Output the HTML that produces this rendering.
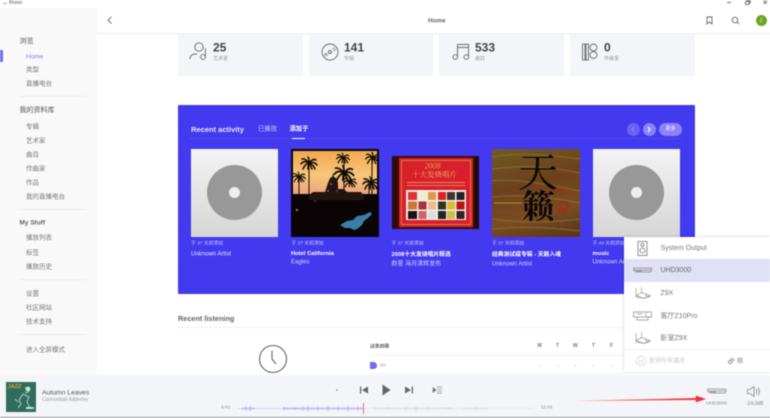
<!DOCTYPE html>
<html lang="zh"><head><meta charset="utf-8"><title>Roon</title>
<style>
html,body{margin:0;padding:0;background:#fff}
#r{position:relative;width:770px;height:418px;overflow:hidden;background:#fff;font-family:"Liberation Sans","Noto Sans CJK SC",sans-serif;color:#555;filter:blur(.4px)}
#r div,#r span.t{position:absolute}
.t{white-space:nowrap;line-height:1;transform:translateY(calc(-50% + .7px))}
.s{left:26px;font-size:6.5px;color:#777}
.h{left:19.5px;font-size:7px;color:#555}
.l{position:absolute;left:19px;width:68px;height:1px;background:#ececef}
.card{top:33.5px;height:42px;width:124.5px;background:#f4f5f9}
.n{font-size:12px;font-weight:bold;color:#444}
.lab{font-size:5px;color:#999}
.cap{font-size:4.8px;color:#c9c9ff}
.ti{font-size:5.8px;color:#fff;font-weight:bold}
.su{font-size:6px;color:#d4d4ff}
.pr{left:660.5px;font-size:7px;color:#777}
.cov{top:149px;width:87.5px;height:87.5px;background:linear-gradient(#f3f3f3,#d6d6d6);overflow:hidden}
.cov i{position:absolute;left:16.5px;top:16px;width:55px;height:55px;border-radius:50%;background:#989898}
.cov b{position:absolute;left:38px;top:37.5px;width:11.5px;height:11.5px;border-radius:50%;background:#eee}
svg{position:absolute;overflow:visible}
.d{font-size:5px;color:#777}
</style></head><body><div id="r">

<!-- title bar -->
<div style="left:3px;top:3px;width:4px;height:1px;background:#aaa"></div>
<span class="t" style="left:9px;top:2.500px;font-size:5.500px;color:#555">Roon</span>
<div style="left:727px;top:2px;width:4px;height:1px;background:#666"></div>
<svg style="left:745px;top:0" width="6" height="5" fill="none" stroke="#555" stroke-width=".8"><path d="M.5 1.5h3.5v3h-3.5zM2 1.5V.5h3.2v2.5H4"/></svg>
<svg style="left:763px;top:0" width="5" height="5" fill="none" stroke="#555" stroke-width=".8"><path d="M.5 .5l3.500 3.500M4 .5L.5 4"/></svg>

<!-- sidebar -->
<div style="left:0;top:8px;width:97px;height:367px;background:#f9f9fa"></div>
<div style="left:0;top:50px;width:2.5px;height:12px;background:#6f6cf5"></div>
<span class="t h" style="top:41px">浏览</span>
<span class="t s" style="top:56.5px;color:#8482f5">Home</span>
<span class="t s" style="top:70px">类型</span>
<span class="t s" style="top:84px">直播电台</span>
<div class="l" style="top:96px"></div>
<span class="t h" style="top:110px">我的资料库</span>
<span class="t s" style="top:126.5px">专辑</span>
<span class="t s" style="top:140.5px">艺术家</span>
<span class="t s" style="top:155px">曲目</span>
<span class="t s" style="top:169px">作曲家</span>
<span class="t s" style="top:183px">作品</span>
<span class="t s" style="top:197px">我的直播电台</span>
<div class="l" style="top:209px"></div>
<span class="t h" style="top:222.5px;font-size:6.5px;font-weight:bold;color:#666">My Stuff</span>
<span class="t s" style="top:238px">播放列表</span>
<span class="t s" style="top:252.5px">标签</span>
<span class="t s" style="top:266.5px">播放历史</span>
<div class="l" style="top:279px"></div>
<span class="t s" style="top:294px">设置</span>
<span class="t s" style="top:308px">社区网站</span>
<span class="t s" style="top:322px">技术支持</span>
<div class="l" style="top:334px"></div>
<span class="t s" style="top:349.5px">进入全屏模式</span>

<!-- header -->
<div style="left:97px;top:33px;width:673px;height:1px;background:#f0f0f3"></div>
<svg style="left:107px;top:16px" width="6" height="9" fill="none" stroke="#666" stroke-width=".9"><path d="M4.5 .8L1 4.200l3.500 3.500"/></svg>
<span class="t" style="left:428px;top:20.5px;font-size:6.300px;font-weight:bold;color:#666">Home</span>
<svg style="left:706px;top:16px" width="7" height="9" fill="none" stroke="#666" stroke-width=".9"><path d="M1 1h5v7L3.500 6 1 8z"/></svg>
<svg style="left:731px;top:16px" width="9" height="9" fill="none" stroke="#666" stroke-width=".9"><circle cx="4" cy="4" r="2.800"/><path d="M6 6l2 2"/></svg>
<div style="left:755.5px;top:15px;width:11px;height:11px;border-radius:50%;background:#6aa524"></div>
<span class="t" style="left:759.5px;top:20.500px;font-size:5px;color:#fff">J</span>

<!-- stat cards -->
<div class="card" style="left:178px"></div>
<div class="card" style="left:308.5px"></div>
<div class="card" style="left:439px"></div>
<div class="card" style="left:570px"></div>
<svg style="left:189px;top:42px" width="20" height="19" fill="none" stroke="#666" stroke-width=".9"><circle cx="10" cy="5" r="4.200"/><path d="M1 17c0-3 2-5 5-5h2"/><circle cx="14" cy="15" r="2.400"/><path d="M16.400 15V6"/></svg>
<svg style="left:321px;top:43px" width="18" height="18" fill="none" stroke="#666" stroke-width=".9"><circle cx="9" cy="9" r="8"/><circle cx="9" cy="9" r="1.500"/><path d="M3 12l3-2M4.500 13.500l2-2M11.500 6.500l2-2M13 8l2-2" stroke-width=".8"/></svg>
<svg style="left:452px;top:43px" width="18" height="17" fill="none" stroke="#666" stroke-width=".9"><path d="M5.500 14V1.500h11V14M5.500 4.500h11"/><circle cx="3.300" cy="14" r="2.300"/><circle cx="14.300" cy="14" r="2.300"/></svg>
<svg style="left:582px;top:43px" width="16" height="18" fill="none" stroke="#666" stroke-width=".9"><rect x=".5" y="1" width="2.500" height="16"/><rect x="4" y="1" width="2.500" height="16"/><circle cx="11.500" cy="4.500" r="3.500"/><circle cx="11.500" cy="12" r="3.500"/></svg>
<span class="t n" style="left:213px;top:46.500px">25</span><span class="t lab" style="left:213px;top:59px">艺术家</span>
<span class="t n" style="left:344px;top:46.500px">141</span><span class="t lab" style="left:344px;top:59px">专辑</span>
<span class="t n" style="left:475px;top:46.500px">533</span><span class="t lab" style="left:475px;top:59px">曲目</span>
<span class="t n" style="left:604px;top:46.500px">0</span><span class="t lab" style="left:604px;top:59px">作曲家</span>

<!-- blue panel -->
<div style="left:178px;top:105px;width:516.500px;height:189px;background:#4339ef;border-radius:1px"></div>
<span class="t" style="left:191px;top:128.500px;font-size:7.500px;font-weight:bold;color:#e6e6ff">Recent activity</span>
<span class="t" style="left:258px;top:128.500px;font-size:6.300px;color:#c9c9ff">已播放</span>
<span class="t" style="left:289.500px;top:128.500px;font-size:6.300px;font-weight:bold;color:#fff">添加于</span>
<div style="left:190px;top:138px;width:491px;height:1px;background:#5249f2"></div>
<div style="left:291.500px;top:137.500px;width:13px;height:1.200px;background:#fff"></div>
<div style="left:626.500px;top:123px;width:13px;height:13px;border-radius:50%;background:#6a62f4"></div>
<svg style="left:631px;top:126px" width="4" height="7" fill="none" stroke="#8f89f8" stroke-width="1"><path d="M3 1L1 3.500 3 6"/></svg>
<div style="left:642.500px;top:123px;width:13px;height:13px;border-radius:50%;background:#8a84f8"></div>
<svg style="left:647px;top:126px" width="4" height="7" fill="none" stroke="#fff" stroke-width="1.100"><path d="M1 1l2 2.500L1 6"/></svg>
<div style="left:659px;top:123px;width:22.500px;height:13px;border-radius:6.500px;background:#8a84f8"></div>
<span class="t" style="left:665.500px;top:129px;font-size:5px;color:#fff">更多</span>

<!-- covers -->
<div class="cov" style="left:190.500px"><i></i><b></b></div>

<div style="left:291px;top:149px;width:87.500px;height:87.500px;background:#05060c;overflow:hidden">
<svg width="88" height="88" viewBox="0 0 88 88">
<defs>
<linearGradient id="sky" x1="0" y1="0" x2="0" y2="1"><stop offset="0" stop-color="#f2a84e"/><stop offset=".55" stop-color="#f8c67c"/><stop offset="1" stop-color="#eaa27e"/></linearGradient>
<g id="palm" fill="none" stroke="#120c06" stroke-width="1.500" stroke-linecap="round"><path d="M0 0q-5-3-8 1M0 0q-4-5-7-4M0 0q0-5-1-6M0 0q4-5 7-3M0 0q5-2 8 2M0 0q-4 1-6 6M0 0q4 1 6 6M0 0q-1 3-1 6M0 0q2 3 3 6"/></g>
</defs>
<rect x="2" y="2" width="84" height="44" fill="url(#sky)"/>
<rect x="2" y="45" width="84" height="41" fill="#0a0504"/>
<path d="M8 46V28M18 46V14M53 46V8M81 46V8M78 46V34" stroke="#120c06" stroke-width="1" fill="none"/>
<use href="#palm" transform="translate(18 14)"/>
<use href="#palm" transform="translate(8 28) scale(.8)"/>
<use href="#palm" transform="translate(52 9) scale(.8)"/>
<use href="#palm" transform="translate(53 24) scale(1.200)"/>
<use href="#palm" transform="translate(59 33) scale(.8)"/>
<use href="#palm" transform="translate(82 9) scale(.9)"/>
<use href="#palm" transform="translate(80 34) scale(1)"/>
<path d="M18 46l4-3h12l3-9 2-5 2-1 1-4 1 4 2 1 2 5v6h6l3 3h14l3 4v4H18z" fill="#241410"/>
<circle cx="37" cy="42" r="1" fill="#8a6a4a"/><circle cx="40" cy="35" r="1" fill="#8a6a4a"/><circle cx="46" cy="42" r="1" fill="#6a4a3a"/>
<circle cx="6" cy="61" r="1.200" fill="#c0662a"/><circle cx="24" cy="52" r=".8" fill="#a04a20"/>
<path d="M49 76l7-4 6-1 4-4 7-1 6-3 2 2-4 4-4 3-2 4-5 4-3 1-4-2-5 0z" fill="#3a7fa8"/>
</svg></div>

<div style="left:391.500px;top:156px;width:87.500px;height:73px;background:linear-gradient(90deg,#2a0a08,#3a0c0a 8%,#3a1007 90%,#1a0a06);overflow:hidden">
<div style="left:7px;top:1.500px;width:74px;height:69.500px;background:#d81f2b"></div>
<div style="left:9px;top:3.500px;width:70px;height:65.500px;border:.5px solid #e07a3a;box-sizing:border-box"></div>
<span class="t" style="left:33px;top:9.500px;font-size:8px;font-style:italic;color:#e9a84a;font-family:'Liberation Serif',serif">2008</span>
<span class="t" style="left:20.500px;top:18px;font-size:7.500px;color:#f0b860;font-family:'Noto Serif CJK SC',serif">十大发烧唱片</span>
<div style="left:15px;top:26px;width:58px;height:1px;background:#e88a60"></div>
<div style="left:15px;top:29px;width:58px;height:1px;background:#e87a60"></div>
<div style="left:14.500px;top:34px;width:60px;height:29.500px;background:#eee"></div>
<svg style="left:16px;top:35.500px" width="57" height="27">
<rect width="9" height="8" fill="#d33"/><rect x="10.500" width="8" height="8" fill="#eec"/><rect x="20" width="8" height="8" fill="#d94"/><rect x="30" width="8" height="8" fill="#d22"/><rect x="39" width="8" height="8" fill="#433"/><rect x="48.500" width="8" height="8" fill="#222"/>
<rect y="9.500" width="9" height="8" fill="#c73"/><rect x="10.500" y="9.500" width="8" height="8" fill="#a33"/><rect x="20" y="9.500" width="8" height="8" fill="#eb8"/><rect x="30" y="9.500" width="8" height="8" fill="#332"/><rect x="39" y="9.500" width="8" height="8" fill="#db3"/><rect x="48.500" y="9.500" width="8" height="8" fill="#b11"/>
<rect y="19" width="9" height="8" fill="#211"/><rect x="10.500" y="19" width="8" height="8" fill="#c66"/><rect x="20" y="19" width="8" height="8" fill="#ddd"/><rect x="30" y="19" width="8" height="8" fill="#222"/><rect x="39" y="19" width="8" height="8" fill="#cb4"/><rect x="48.500" y="19" width="8" height="8" fill="#322"/>
</svg></div>

<div style="left:492px;top:149px;width:87.500px;height:87.500px;background:linear-gradient(165deg,#6f5a24,#6d401c 40%,#7a4c20 70%,#58341a);overflow:hidden">
<svg width="88" height="88" fill="none"><path d="M0 8q30-6 88 2M0 20q40-6 88 4M0 32q20-4 88 10M0 48q40-4 88 6M0 70q40 6 88 0M0 80q40-4 88 2" stroke="#8a7a35" stroke-width="1.500" opacity=".55"/><path d="M2 54h28" stroke="#a89230" stroke-width="1"/><path d="M3 63h24" stroke="#8a3a4a" stroke-width="1"/></svg>
<span class="t" style="left:26px;top:20.500px;font-size:40px;color:#0a0806;font-family:'Noto Serif CJK SC',serif">天</span>
<span class="t" style="left:30px;top:55px;font-size:33px;font-weight:bold;color:#0a0806;font-family:'Noto Serif CJK SC',serif">籁</span>
<svg width="88" height="88" style="left:0;top:0" fill="none" stroke="#b2201c" stroke-width="1.200"><path d="M62 44l6-3 8 3M66 56c3-4 6-4 9-1s-2 6-5 5-5 1-3 3l8-1"/></svg>
</div>

<div class="cov" style="left:592.500px"><i></i><b></b></div>

<span class="t cap" style="left:191px;top:243.500px">于 37 天前添加</span>
<span class="t" style="left:191px;top:254px;font-size:6px;color:#e6e6ff">Unknown Artist</span>
<span class="t cap" style="left:291.500px;top:243.500px">于 37 天前添加</span>
<span class="t ti" style="left:291px;top:253.500px">Hotel California</span>
<span class="t su" style="left:291px;top:261.500px">Eagles</span>
<span class="t cap" style="left:391.500px;top:243.500px">于 37 天前添加</span>
<span class="t ti" style="left:391.500px;top:254.500px">2008十大发烧唱片精选</span>
<span class="t su" style="left:391.500px;top:264px">群星 海月清辉发布</span>
<span class="t cap" style="left:492px;top:243.500px">于 37 天前添加</span>
<span class="t ti" style="left:492px;top:254.500px">经典测试碟专辑 - 天籁入魂</span>
<span class="t su" style="left:492px;top:263.500px">Unknown Artist</span>
<span class="t cap" style="left:592.500px;top:243.500px">于 43 天前添加</span>
<span class="t ti" style="left:592.500px;top:253.500px">music</span>
<span class="t su" style="left:592.500px;top:261.500px">Unknown Artist</span>

<!-- recent listening -->
<span class="t" style="left:178px;top:318px;font-size:7.300px;font-weight:bold;color:#666">Recent listening</span>
<div style="left:178px;top:327px;width:445px;height:1px;background:#f2f2f4"></div>
<svg style="left:257.500px;top:344px" width="30" height="30" fill="none" stroke="#666" stroke-width="1.100"><circle cx="15" cy="15" r="13.500"/><path d="M14 6.500V15l4 5"/></svg>
<span class="t" style="left:370px;top:346.500px;font-size:4.800px;color:#555;font-weight:bold">过去四周</span>
<span class="t d" style="left:537.500px;top:346px;font-weight:bold">M</span>
<span class="t d" style="left:556px;top:346px;font-weight:bold">T</span>
<span class="t d" style="left:573px;top:346px;font-weight:bold">W</span>
<span class="t d" style="left:592px;top:346px;font-weight:bold">T</span>
<span class="t d" style="left:610px;top:346px;font-weight:bold">F</span>
<div style="left:370px;top:355px;width:253px;height:1px;background:#f0f0f2"></div>
<div style="left:370px;top:361.500px;width:7px;height:7px;border-radius:0 3.500px 3.500px 0;background:#6f6cf5"></div>
<span class="t" style="left:380px;top:364.500px;font-size:4.500px;color:#999">0m</span>
<div style="left:539px;top:364.500px;width:1.200px;height:1.200px;background:#aaa8f5"></div>
<div style="left:557px;top:364.500px;width:1.200px;height:1.200px;background:#aaa8f5"></div>
<div style="left:575px;top:364.500px;width:1.200px;height:1.200px;background:#aaa8f5"></div>
<div style="left:593px;top:364.500px;width:1.200px;height:1.200px;background:#aaa8f5"></div>
<div style="left:611px;top:364.500px;width:1.200px;height:1.200px;background:#aaa8f5"></div>
<div style="left:370px;top:373px;width:253px;height:1px;background:#f0f0f2"></div>

<!-- bottom bar -->
<div style="left:0;top:375px;width:770px;height:41.500px;background:#f4f5f8"></div>
<div style="left:0;top:416.500px;width:770px;height:1.500px;background:#8b8c90"></div>
<div style="left:6px;top:382px;width:30px;height:30px;background:#2f6d5c;overflow:hidden">
<span class="t" style="left:1.500px;top:4.500px;font-size:5.500px;font-weight:bold;font-style:italic;color:#d9a92a">JAZZ</span>
<svg width="30" height="30" fill="none" stroke="#cfe3d8" stroke-width=".8" style="left:0;top:0"><path d="M19 6c3-1 5 1 4 3s-3 2-4 1M17 12l6 3-2 5 3 6h5M17 12l-4 6 2 4-3 4M12 20l-3-3"/><circle cx="22" cy="7" r="2" fill="#cfe3d8"/><path d="M20 26h7" stroke-width="2"/></svg>
</div>
<span class="t" style="left:42px;top:393px;font-size:6.800px;color:#555">Autumn Leaves</span>
<span class="t" style="left:42px;top:400px;font-size:5px;color:#999">Cannonball Adderley</span>

<div style="left:336.200px;top:389.200px;width:2px;height:2px;border-radius:50%;background:#aaa"></div>
<svg style="left:360px;top:386px" width="8" height="8" fill="#666"><path d="M0 .5h1.300v7H0zM8 .5v7L2 4z"/></svg>
<svg style="left:382px;top:384px" width="9" height="12" fill="#666"><path d="M.500 .5L8.500 6 .5 11.500z"/></svg>
<svg style="left:405px;top:386px" width="8" height="8" fill="#666"><path d="M6.700 .5H8v7H6.700zM0 .5v7L6 4z"/></svg>
<svg style="left:433px;top:386px" width="9" height="8" fill="none" stroke="#777" stroke-width=".6"><path d="M0 1.500l3 2.500-3 2.500z" fill="#777"/><path d="M4 .8h5M4 3h5M4 5h5M4 7.200h5"/></svg>

<span class="t" style="left:221px;top:407.500px;font-size:4.800px;color:#888">4:41</span>
<svg style="left:238px;top:403px" width="296" height="11">
<path d="M0 5.500H125" stroke="#d4d5fb" stroke-width="1"/>
<path d="M125 5.500H296" stroke="#e8e9ec" stroke-width="1"/>
<path d="M4 5.500h10M12 5.500h5M45 5.500h80" stroke="#c2c3f9" stroke-width="2"/>
<path d="M8 3.500v4M12 3v5M46 4v3M57 4v3M65 3.500v4M70 3v5M80 3.500v4M90 3v5M100 3.500v4M110 3v5M120 3.500v4" stroke="#b5b6f8" stroke-width="1"/>
<path d="M135 5.500h80M225 5.500h25" stroke="#dfe0e4" stroke-width="1.800"/>
<path d="M150 4v3M168 3.500v4M178 3v5M190 3.500v4M210 4v3M238 3.500v4" stroke="#d6d7dc" stroke-width="1"/>
</svg>
<div style="left:363px;top:403px;width:1px;height:11px;background:#ee6e80"></div>
<span class="t" style="left:541px;top:407.500px;font-size:4.800px;color:#888">11:01</span>

<svg style="left:707px;top:388px" width="20" height="7" fill="none" stroke="#888" stroke-width=".7"><path d="M.5 1h18.500v2.500L18 5H3L.5 3zM.5 3h18M3 4h6"/></svg>
<span class="t" style="left:706px;top:404px;font-size:4.800px;color:#888">UHD3000</span>
<svg style="left:747px;top:386px" width="13" height="11" fill="none" stroke="#888" stroke-width=".8"><path d="M.5 3.500h2.500L7 .5v10L3 7.500H.5zM9 3c1 1.500 1 3.500 0 5M11 1.500c1.800 2.500 1.800 5.500 0 8"/></svg>
<span class="t" style="left:746px;top:404px;font-size:5px;color:#888">-24.0dB</span>

<!-- device popup -->
<div style="left:623.500px;top:237px;width:146.500px;height:135px;background:#fff;box-shadow:0 0 3px rgba(0,0,0,.2)"></div>
<div style="left:623.500px;top:259px;width:146.500px;height:22.500px;background:#e0e0f7"></div>
<svg style="left:637px;top:241px" width="12" height="15" fill="none" stroke="#777" stroke-width=".8"><rect x="1" y=".5" width="9" height="14"/><circle cx="5.500" cy="4" r="1.500"/><circle cx="5.500" cy="9.500" r="2.500"/></svg>
<span class="t pr" style="top:247.500px">System Output</span>
<svg style="left:633px;top:267px" width="20" height="7" fill="none" stroke="#888" stroke-width=".7"><path d="M.5 1h18v2.500L17.500 5H3L.5 3zM.5 3h18M3 4h6"/></svg>
<span class="t pr" style="top:270px;color:#666">UHD3000</span>
<svg style="left:635px;top:287px" width="16" height="12" fill="none" stroke="#999" stroke-width=".7"><path d="M1 1v8M6.500 0v6M1 8.500l6-3 8 3-6 3zM1 8.500v1.500l8 1.500 6-2V8.500"/><path d="M10 8.500h2" stroke-width="1.200"/></svg>
<span class="t pr" style="top:292.500px">Z9X</span>
<svg style="left:633px;top:311px" width="20" height="10" fill="none" stroke="#888" stroke-width=".7"><path d="M.5 1h18v5H.5zM4 6v3h11V6M4 3h5M13 2v3"/></svg>
<span class="t pr" style="top:315.500px">客厅Z10Pro</span>
<svg style="left:635px;top:332px" width="16" height="12" fill="none" stroke="#999" stroke-width=".7"><path d="M1 1v8M6.500 0v6M1 8.500l6-3 8 3-6 3zM1 8.500v1.500l8 1.500 6-2V8.500"/><path d="M10 8.500h2" stroke-width="1.200"/></svg>
<span class="t pr" style="top:338px">卧室Z9X</span>
<div style="left:623.500px;top:349px;width:146.500px;height:1px;background:#eeeef0"></div>
<svg style="left:636px;top:356px" width="10" height="10" fill="none" stroke="#ccc" stroke-width=".7"><circle cx="5" cy="5" r="4.500"/><path d="M3.800 3.300v3.400M6.200 3.300v3.400"/></svg>
<span class="t" style="left:649px;top:361px;font-size:6px;color:#ccc">暂停所有播放</span>
<svg style="left:727px;top:357px" width="8" height="8" fill="none" stroke="#888" stroke-width=".8"><path d="M1 5l2-2 2 2-2 2zM3.500 3L5 1.200 7 3 5 5"/></svg>
<span class="t" style="left:737px;top:361px;font-size:6px;color:#777">组</span>

<!-- red arrow -->
<svg style="left:570px;top:392px" width="138" height="12"><defs><linearGradient id="ar" x1="0" x2="1"><stop offset="0" stop-color="#f77"/><stop offset="1" stop-color="#f22a3a"/></linearGradient></defs><path d="M3 9L126 6 125.500 3.500 136 7l-10.500 3.500 .5-2.500z" fill="url(#ar)"/></svg>

</div></body></html>
